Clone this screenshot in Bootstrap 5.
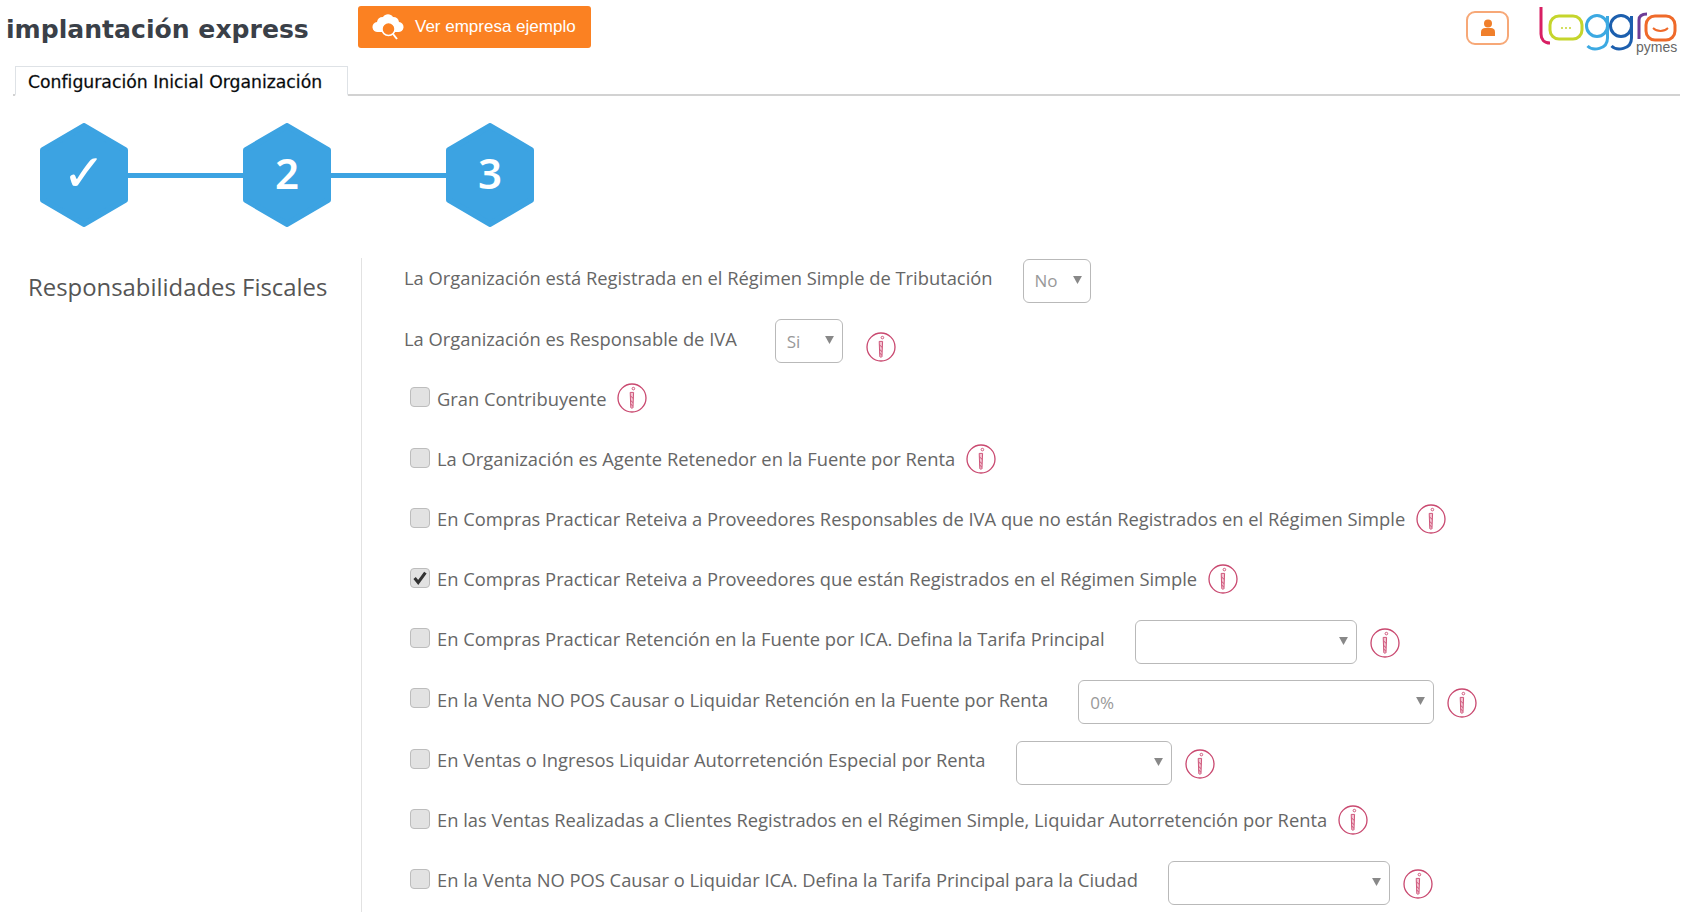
<!DOCTYPE html>
<html lang="es">
<head>
<meta charset="UTF-8">
<title>Implantación express</title>
<link href="https://cdn.jsdelivr.net/npm/bootstrap@5.3.0/dist/css/bootstrap.min.css" rel="stylesheet">
<style>
body { background: #fff; overflow: hidden; font-family: "Open Sans", sans-serif; color: #666; }
.top-bar { height: 66px; padding: 6px 13px 0 6px; }
.brand-title { font: bold 25.1px "DejaVu Sans", sans-serif; color: #3a4048; margin: 0 52px 0 0; width: 300px; white-space: nowrap; padding-top: 9px; }
.demo-btn { background: #fb8122; border: 0; color: #fff; width: 233px; height: 42px; border-radius: 3px; font: 17px "Liberation Sans", sans-serif; padding: 0 0 0 14px; gap: 11px; }
.demo-btn:hover { background: #fb8122; color: #fff; }
.user-btn { width: 43px; height: 34px; border: 2px solid #f7a877; border-radius: 9px; background: #fff; margin: 5px 28px 0 0; padding: 0; }
.logo-mark { height: 52px; }
.tab-strip { margin: 0 11px 0 13px; border-bottom: 2px solid #d2d2d2; height: 30px; padding-left: 2px; }
.tab-strip .nav-link { height: 30px; width: 333px; padding: 5px 0 0 12px; border: 1px solid #d2d2d2; border-bottom: 2px solid #fff; border-radius: 0; color: #3a4048; font: 17.25px/20px "DejaVu Sans", sans-serif; -webkit-text-stroke: .3px #3a4048; white-space: nowrap; background: #fff; }
.step-row { width: 494px; margin: 27px 0 31px 40px; }
.hex-step { width: 88px; height: 104px; flex: none; font: 600 42px "Noto Sans", sans-serif; color: #fff; padding-bottom: 5px; }
.hex-step svg { position: absolute; inset: 0; }
.hex-step span { position: relative; }
.tick-glyph { font: 400 52px "DejaVu Sans", sans-serif; }
.step-line { flex: 1; height: 5px; background: #3ca3e2; }
.side-col { width: 362px; flex: none; border-right: 1px solid #e2e2e2; padding: 0 0 0 28px; min-height: 700px; }
.side-col h2 { font: 23.9px "Open Sans", sans-serif; color: #555; margin: 12px 0 0; white-space: nowrap; }
.form-col { padding-left: 42px; margin-top: -10px; }
.fiscal-row { height: 60.2px; font-size: 18.33px; white-space: nowrap; color: #666; }
.fiscal-check { padding-left: 6px; }
.fiscal-row .form-check-input { width: 20px; height: 20px; margin: -2px 7px 0 0; background-color: #e2e2e2; border: 1px solid #bdbdbd; border-radius: 4px; flex: none; }
.fiscal-row .form-check-input:checked { background-color: #e2e2e2; border-color: #bdbdbd; background-image: url("data:image/svg+xml,%3csvg xmlns='http://www.w3.org/2000/svg' viewBox='0 0 20 20'%3e%3cpath fill='none' stroke='%23333' stroke-width='3.4' d='M4 10l4 5 8-11'/%3e%3c/svg%3e"); background-size: 100%; }
.fiscal-row label { margin: 0; }
.fiscal-select { height: 44px; margin: 6px 0 0 30px; padding: 0 20px 0 11px; border: 1px solid #b9b9b9; border-radius: 6px; color: #999; font-size: 17px; flex: none; box-shadow: none; background-size: 9px 8px; background-position: right 8px top 16px; background-image: url("data:image/svg+xml,%3csvg xmlns='http://www.w3.org/2000/svg' viewBox='0 0 10 9'%3e%3cpath fill='%23888' d='M0 0h10L5 9z'/%3e%3c/svg%3e"); }
.w-yesno { width: 68px; }
.w-iva { margin-left: 38px; }
.w-tarifa { width: 222px; }
.w-wide { width: 356px; }
.w-mid { width: 156px; }
.info-mark { width: 30px; height: 30px; flex: none; margin-left: 11px; }
.info-after-select { margin: 8px 0 0 13px; }
.info-iva { margin: 18px 0 0 23px; }
</style>
</head>
<body>
<svg width="0" height="0" class="position-absolute">
  <symbol id="info" viewBox="0 0 30 30">
    <circle cx="15" cy="15" r="14" fill="#fff" stroke="#c9486f" stroke-width="1.3"/>
    <circle cx="16.4" cy="5.6" r="1.3" fill="none" stroke="#c9486f" stroke-width=".9"/>
    <path d="M13.200 9.400h3.400l-.6 15.200c-.1.8-2.100.8-2.200 0z" fill="#f3c3d1" stroke="#c9486f" stroke-width=".9"/>
    <path d="M13.600 13l2.600 2.400M13.600 17.400l2.400 2.200M13.600 21l2.200 2" stroke="#c9486f" stroke-width=".9"/>
  </symbol>
</svg>

<div class="top-bar d-flex align-items-start">
  <h1 class="brand-title">implantación express</h1>
  <button class="btn demo-btn d-flex align-items-center" type="button">
    <svg width="32" height="30" viewBox="0 0 32 30">
      <path fill="#fff" d="M6 20a5 5 0 0 1-1-10 6 6 0 0 1 6-5 6 6 0 0 1 10 0 6 6 0 0 1 6 5 5 5 0 0 1-1 10z"/>
      <circle cx="16.500" cy="17" r="6.500" fill="#fb8122" stroke="#fff" stroke-width="1.500"/>
      <path d="M21 22l4 5" stroke="#fff" stroke-width="2"/>
    </svg>
    Ver empresa ejemplo
  </button>
  <button class="user-btn ms-auto d-flex align-items-center justify-content-center" type="button" aria-label="Usuario">
    <svg width="16" height="18" viewBox="0 0 16 18">
      <circle cx="8" cy="4.500" r="4" fill="#f07f2b"/>
      <path fill="#f07f2b" d="M1 17v-4c0-3 2-4 4-4h6c2 0 4 1 4 4v4z"/>
    </svg>
  </button>
  <svg class="logo-mark" width="141" height="52" viewBox="0 0 141 52" fill="none" stroke-width="3">
    <path stroke="#d81f63" d="M4 1v27c0 5 3 9 9 9"/>
    <rect x="13" y="10" width="32" height="23" rx="9" stroke="#c5d52c"/>
    <path stroke="#c5d52c" stroke-dasharray="2 2" stroke-width="1.500" d="M24 22h10"/>
    <circle cx="60" cy="20" r="10.500" stroke="#3ca9e2"/>
    <path stroke="#3ca9e2" d="M70.500 10v22c0 12-15 13-20 8"/>
    <circle cx="84" cy="20" r="10.500" stroke="#1c5fae"/>
    <path stroke="#1c5fae" d="M94.500 10v22c0 12-15 13-20 8"/>
    <path stroke="#6d3d97" d="M102 33V14c0-5 4-6 8-6"/>
    <rect x="109" y="10" width="29" height="24" rx="9" fill="#fff" stroke="#ef6a2a"/>
    <path stroke="#ef6a2a" stroke-width="1.800" d="M116 22c4 4 11 4 15 0"/>
    <text x="99" y="46" fill="#666" font-family="Liberation Sans, sans-serif" font-size="14" stroke="none">pymes</text>
  </svg>
</div>

<ul class="nav nav-tabs tab-strip">
  <li class="nav-item"><a class="nav-link active" href="#">Configuración Inicial Organización</a></li>
</ul>

<div class="step-row d-flex align-items-center">
  <div class="hex-step position-relative d-flex align-items-center justify-content-center">
    <svg width="88" height="104" viewBox="0 0 88 104"><path fill="#3ca3e2" stroke="#3ca3e2" stroke-width="6" stroke-linejoin="round" d="M44 3l41 24v50L44 101 3 77V27z"/></svg>
    <span class="tick-glyph">✓</span>
  </div>
  <div class="step-line"></div>
  <div class="hex-step position-relative d-flex align-items-center justify-content-center">
    <svg width="88" height="104" viewBox="0 0 88 104"><path fill="#3ca3e2" stroke="#3ca3e2" stroke-width="6" stroke-linejoin="round" d="M44 3l41 24v50L44 101 3 77V27z"/></svg>
    <span>2</span>
  </div>
  <div class="step-line"></div>
  <div class="hex-step position-relative d-flex align-items-center justify-content-center">
    <svg width="88" height="104" viewBox="0 0 88 104"><path fill="#3ca3e2" stroke="#3ca3e2" stroke-width="6" stroke-linejoin="round" d="M44 3l41 24v50L44 101 3 77V27z"/></svg>
    <span>3</span>
  </div>
</div>

<div class="d-flex">
  <div class="side-col"><h2>Responsabilidades Fiscales</h2></div>
  <div class="form-col flex-grow-1">
    <div class="fiscal-row d-flex align-items-center">
      <span>La Organización está Registrada en el Régimen Simple de Tributación</span>
      <select class="form-select fiscal-select w-yesno"><option>No</option></select>
    </div>
    <div class="fiscal-row d-flex align-items-center">
      <span>La Organización es Responsable de IVA</span>
      <select class="form-select fiscal-select w-yesno w-iva"><option>Si</option></select>
      <svg class="info-mark info-iva"><use href="#info"/></svg>
    </div>
    <div class="fiscal-row fiscal-check d-flex align-items-center">
      <input class="form-check-input" type="checkbox" id="c1"><label for="c1">Gran Contribuyente</label>
      <svg class="info-mark"><use href="#info"/></svg>
    </div>
    <div class="fiscal-row fiscal-check d-flex align-items-center">
      <input class="form-check-input" type="checkbox" id="c2"><label for="c2">La Organización es Agente Retenedor en la Fuente por Renta</label>
      <svg class="info-mark"><use href="#info"/></svg>
    </div>
    <div class="fiscal-row fiscal-check d-flex align-items-center">
      <input class="form-check-input" type="checkbox" id="c3"><label for="c3">En Compras Practicar Reteiva a Proveedores Responsables de IVA que no están Registrados en el Régimen Simple</label>
      <svg class="info-mark"><use href="#info"/></svg>
    </div>
    <div class="fiscal-row fiscal-check d-flex align-items-center">
      <input class="form-check-input" type="checkbox" id="c4" checked><label for="c4">En Compras Practicar Reteiva a Proveedores que están Registrados en el Régimen Simple</label>
      <svg class="info-mark"><use href="#info"/></svg>
    </div>
    <div class="fiscal-row fiscal-check d-flex align-items-center">
      <input class="form-check-input" type="checkbox" id="c5"><label for="c5">En Compras Practicar Retención en la Fuente por ICA. Defina la Tarifa Principal</label>
      <select class="form-select fiscal-select w-tarifa"><option></option></select>
      <svg class="info-mark info-after-select"><use href="#info"/></svg>
    </div>
    <div class="fiscal-row fiscal-check d-flex align-items-center">
      <input class="form-check-input" type="checkbox" id="c6"><label for="c6">En la Venta NO POS Causar o Liquidar Retención en la Fuente por Renta</label>
      <select class="form-select fiscal-select w-wide"><option>0%</option></select>
      <svg class="info-mark info-after-select"><use href="#info"/></svg>
    </div>
    <div class="fiscal-row fiscal-check d-flex align-items-center">
      <input class="form-check-input" type="checkbox" id="c7"><label for="c7">En Ventas o Ingresos Liquidar Autorretención Especial por Renta</label>
      <select class="form-select fiscal-select w-mid"><option></option></select>
      <svg class="info-mark info-after-select"><use href="#info"/></svg>
    </div>
    <div class="fiscal-row fiscal-check d-flex align-items-center">
      <input class="form-check-input" type="checkbox" id="c8"><label for="c8">En las Ventas Realizadas a Clientes Registrados en el Régimen Simple, Liquidar Autorretención por Renta</label>
      <svg class="info-mark"><use href="#info"/></svg>
    </div>
    <div class="fiscal-row fiscal-check d-flex align-items-center">
      <input class="form-check-input" type="checkbox" id="c9"><label for="c9">En la Venta NO POS Causar o Liquidar ICA. Defina la Tarifa Principal para la Ciudad</label>
      <select class="form-select fiscal-select w-tarifa"><option></option></select>
      <svg class="info-mark info-after-select"><use href="#info"/></svg>
    </div>
  </div>
</div>
</body>
</html>
